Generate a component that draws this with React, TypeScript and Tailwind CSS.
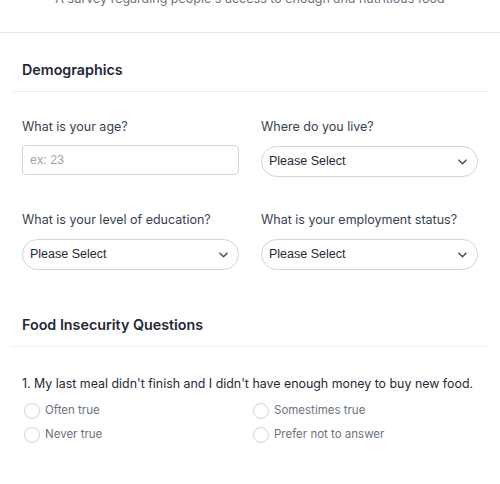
import React, { FC } from 'react';

const Chevron: FC = () => (
  <svg
    className="pointer-events-none absolute right-[11px] top-1/2 -translate-y-1/2"
    width="9"
    height="6"
    viewBox="0 0 9 6"
    fill="none"
  >
    <path d="M1 1.2l3.5 3.5L8 1.2" stroke="#4b5563" strokeWidth="1.6" strokeLinecap="round" strokeLinejoin="round" />
  </svg>
);

const SelectField: FC<{ label: string }> = ({ label }) => (
  <div>
    <label className="block text-[12.5px] leading-5 text-[#374151] mb-[9px]">{label}</label>
    <div className="relative">
      <select
        className="w-full h-[31px] appearance-none rounded-full border border-[#d1d5db] bg-white pl-[7px] pr-8 text-[12.5px] text-[#1f2937] outline-none"
        style={{ fontFamily: '"Liberation Sans", Arial, sans-serif' }}
        defaultValue=""
      >
        <option value="">Please Select</option>
      </select>
      <Chevron />
    </div>
  </div>
);

const Radio: FC<{ label: string }> = ({ label }) => (
  <label className="flex h-6 items-center gap-[5px] text-[11.5px] text-[#6b7280]">
    <span className="ml-[2px] h-4 w-4 rounded-full border border-[#d1d5db] bg-white" />
    {label}
  </label>
);

const SectionTitle: FC<{ title: string }> = ({ title }) => (
  <div className="border-b border-[#f0f1f3] px-[11px] pb-[9px]">
    <h2 className="text-[14.3px] leading-6 font-semibold text-[#1f2937]">{title}</h2>
  </div>
);

export default function App() {
  return (
    <div className="min-h-[484px] w-[500px] bg-white" style={{ fontFamily: 'Inter, sans-serif' }}>
      <div className="h-[33px] overflow-hidden border-b border-[#e5e7eb]">
        <p className="-mt-[11px] text-center text-[12.5px] leading-5 text-[#6b7280]">
          A survey regarding people's access to enough and nutritious food
        </p>
      </div>

      <div className="px-[11px] pt-[25px]">
        <SectionTitle title="Demographics" />
        <div className="grid grid-cols-2 gap-x-[22px] gap-y-[33px] px-[11px] pt-[25px]">
          <div>
            <label className="block text-[12.5px] leading-5 text-[#374151] mb-2">What is your age?</label>
            <input
              className="h-[30px] w-full rounded border border-[#d1d5db] px-[7px] text-[12.5px] outline-none placeholder:text-[#9ca3af]"
              style={{ fontFamily: '"Liberation Sans", Arial, sans-serif' }}
              placeholder="ex: 23"
            />
          </div>
          <SelectField label="Where do you live?" />
          <SelectField label="What is your level of education?" />
          <SelectField label="What is your employment status?" />
        </div>

        <div className="pt-[43px]">
          <SectionTitle title="Food Insecurity Questions" />
        </div>

        <div className="px-[11px] pt-[27px]">
          <p className="text-[12.4px] leading-5 text-[#1f2937] mb-[5px] whitespace-nowrap">
            1. My last meal didn't finish and I didn't have enough money to buy new food.
          </p>
          <div className="grid grid-cols-2">
            <Radio label="Often true" />
            <div className="pl-[1px]">
              <Radio label="Somestimes true" />
            </div>
            <Radio label="Never true" />
            <div className="pl-[1px]">
              <Radio label="Prefer not to answer" />
            </div>
          </div>
        </div>
      </div>
    </div>
  );
}
